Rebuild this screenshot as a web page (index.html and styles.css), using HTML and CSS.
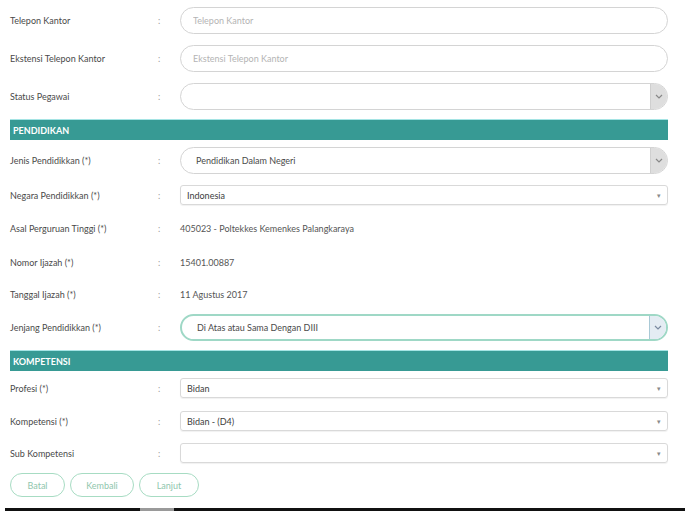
FILE: index.html
```html
<!DOCTYPE html>
<html lang="id">
<head>
  <meta charset="UTF-8" />
  <meta name="viewport" content="width=device-width, initial-scale=1.0"/>
  <title>Data Pegawai</title>
  <link rel="stylesheet" href="styles.css">
</head>
<body>
  <form class="form">
    <div class="row row-xl">
      <label class="label">Telepon Kantor</label>
      <span class="colon">:</span>
      <input class="pill" type="text" placeholder="Telepon Kantor" />
    </div>
    <div class="row row-xl">
      <label class="label">Ekstensi Telepon Kantor</label>
      <span class="colon">:</span>
      <input class="pill" type="text" placeholder="Ekstensi Telepon Kantor" />
    </div>
    <div class="row row-xl">
      <label class="label">Status Pegawai</label>
      <span class="colon">:</span>
      <div class="pill pill-select">
        <span class="pill-value"></span>
        <span class="addon"><svg width="8" height="5" viewBox="0 0 8 5"><path d="M1 1l3 3 3-3" fill="none" stroke="#888" stroke-width="1.2"/></svg></span>
      </div>
    </div>

    <div class="section">PENDIDIKAN</div>

    <div class="row row-first">
      <label class="label">Jenis Pendidikkan (*)</label>
      <span class="colon">:</span>
      <div class="pill pill-select">
        <span class="pill-value">Pendidikan Dalam Negeri</span>
        <span class="addon"><svg width="8" height="5" viewBox="0 0 8 5"><path d="M1 1l3 3 3-3" fill="none" stroke="#888" stroke-width="1.2"/></svg></span>
      </div>
    </div>
    <div class="row row-sm">
      <label class="label">Negara Pendidikkan (*)</label>
      <span class="colon">:</span>
      <div class="box">Indonesia <span class="caret">▾</span></div>
    </div>
    <div class="row row-tall">
      <label class="label">Asal Perguruan Tinggi (*)</label>
      <span class="colon">:</span>
      <span class="value">405023 - Poltekkes Kemenkes Palangkaraya</span>
    </div>
    <div class="row row-md">
      <label class="label">Nomor Ijazah (*)</label>
      <span class="colon">:</span>
      <span class="value">15401.00887</span>
    </div>
    <div class="row row-md">
      <label class="label">Tanggal Ijazah (*)</label>
      <span class="colon">:</span>
      <span class="value">11 Agustus 2017</span>
    </div>
    <div class="row row-lg">
      <label class="label">Jenjang Pendidikkan (*)</label>
      <span class="colon">:</span>
      <div class="pill pill-select pill-focus">
        <span class="pill-value">Di Atas atau Sama Dengan DIII</span>
        <span class="addon"><svg width="8" height="5" viewBox="0 0 8 5"><path d="M1 1l3 3 3-3" fill="none" stroke="#7a8aa0" stroke-width="1.2"/></svg></span>
      </div>
    </div>

    <div class="section section-two">KOMPETENSI</div>

    <div class="row row-lg">
      <label class="label">Profesi (*)</label>
      <span class="colon">:</span>
      <div class="box">Bidan <span class="caret">▾</span></div>
    </div>
    <div class="row row-md">
      <label class="label">Kompetensi (*)</label>
      <span class="colon">:</span>
      <div class="box">Bidan - (D4) <span class="caret">▾</span></div>
    </div>
    <div class="row row-md">
      <label class="label">Sub Kompetensi</label>
      <span class="colon">:</span>
      <div class="box"><span class="caret">▾</span></div>
    </div>

    <div class="actions">
      <button type="button" class="btn btn-batal">Batal</button>
      <button type="button" class="btn btn-kembali">Kembali</button>
      <button type="button" class="btn btn-lanjut">Lanjut</button>
    </div>
  </form>

  <div class="bottom-line">
    <span class="line-seg line-a"></span>
    <span class="line-seg line-grey"></span>
    <span class="line-seg line-b"></span>
  </div>
</body>
</html>
```

FILE: styles.css
```css
:root {
  --teal: #379a94;
  --label: #4a4a4a;
  --border: #d4d4d4;
  --green-soft: #a7dcc3;
}

body {
  font-family: 'Lato', 'Liberation Sans', sans-serif;
  background-color: #ffffff;
  color: var(--label);
  margin: 0;
  padding: 0;
}

.form {
  padding: 1px 32px 0 10px;
}

.row {
  display: flex;
  align-items: center;
  height: 38px;
}

.row-first { height: 40px; }
.row-tall { height: 36px; }
.row-lg { height: 34px; }
.row-md { height: 32px; }
.row-sm { height: 30px; }

.label {
  width: 148px;
  font-size: 9px;
  color: var(--label);
}

.colon {
  width: 22px;
  font-size: 9px;
  color: #9a9a9a;
}

.pill {
  flex: 1;
  box-sizing: border-box;
  height: 27px;
  border: 1px solid var(--border);
  border-radius: 14px;
  padding: 0 0 0 12px;
  font-family: inherit;
  font-size: 9px;
  color: var(--label);
  outline: none;
  background: #fff;
}

.pill::placeholder {
  color: #b4b4b4;
}

.pill-select {
  display: flex;
  align-items: center;
  overflow: hidden;
  padding-left: 15px;
}

.pill-value {
  flex: 1;
  font-size: 9px;
}

.addon {
  width: 16px;
  height: 100%;
  background-color: #dedede;
  border-left: 1px solid #cfcfcf;
  display: flex;
  align-items: center;
  justify-content: center;
}

.pill-focus {
  border: 2px solid #9fd8c6;
}

.pill-focus .addon {
  background-color: #e4ecf3;
  border-left-color: #a9c9d6;
}

.box {
  flex: 1;
  box-sizing: border-box;
  height: 20px;
  border: 1px solid #d9d9d9;
  border-radius: 3px;
  box-shadow: 0 1px 1px rgba(0, 0, 0, 0.06);
  display: flex;
  align-items: center;
  padding: 0 6px;
  font-size: 9px;
  color: #3d3d3d;
}

.caret {
  margin-left: auto;
  color: #8a8a8a;
  font-size: 7px;
}

.value {
  font-size: 9px;
  color: #555;
}

.section {
  margin-top: 4px;
  height: 21px;
  box-sizing: border-box;
  background-color: var(--teal);
  border-top: 1px solid #a5e4e4;
  color: #ffffff;
  font-size: 9px;
  font-weight: 700;
  display: flex;
  align-items: center;
  padding-left: 3px;
}

.section-two {
  margin-top: 6px;
}

.actions {
  display: flex;
  gap: 5px;
  margin-top: 4px;
}

.btn {
  height: 24px;
  box-sizing: border-box;
  border: 1.5px solid var(--green-soft);
  border-radius: 12px;
  background: #fff;
  color: #8fc6ad;
  font-family: inherit;
  font-size: 9px;
  padding: 0;
}

.btn-batal { width: 55px; }
.btn-kembali { width: 64px; }
.btn-lanjut { width: 60px; }

.bottom-line {
  display: flex;
  margin: 11px 15px 0 5px;
  height: 3px;
}

.line-seg {
  height: 3px;
}

.line-a {
  width: 135px;
  background-color: #111;
}

.line-grey {
  width: 34px;
  background-color: #9a9a9a;
}

.line-b {
  flex: 1;
  background-color: #111;
}
```
